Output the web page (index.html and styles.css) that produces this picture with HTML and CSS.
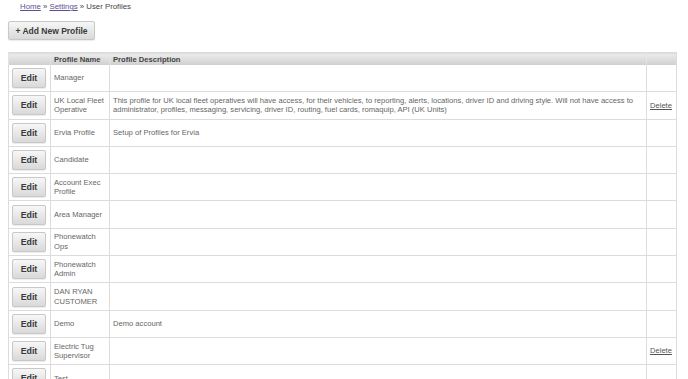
FILE: index.html
```html
<!DOCTYPE html>
<html lang="en">
<head>
    <meta charset="UTF-8">
    <title>User Profiles</title>
    <link rel="stylesheet" href="styles.css">
</head>
<body>
    <div class="breadcrumb">
        <a href="#">Home</a> &raquo; <a href="#">Settings</a> &raquo; User Profiles
    </div>

    <button class="btn add-btn">+ Add New Profile</button>

    <table class="profiles">
        <thead>
            <tr>
                <th class="col-edit"></th>
                <th class="col-name">Profile Name</th>
                <th class="col-desc">Profile Description</th>
                <th class="col-del"></th>
            </tr>
        </thead>
        <tbody>
            <tr>
                <td><button class="btn edit-btn">Edit</button></td>
                <td>Manager</td>
                <td></td>
                <td></td>
            </tr>
            <tr>
                <td><button class="btn edit-btn">Edit</button></td>
                <td>UK Local Fleet Operative</td>
                <td>This profile for UK local fleet operatives will have access, for their vehicles, to reporting, alerts, locations, driver ID and driving style. Will not have access to administrator, profiles, messaging, servicing, driver ID, routing, fuel cards, romaquip, API (UK Units)</td>
                <td><a href="#">Delete</a></td>
            </tr>
            <tr>
                <td><button class="btn edit-btn">Edit</button></td>
                <td>Ervia Profile</td>
                <td>Setup of Profiles for Ervia</td>
                <td></td>
            </tr>
            <tr>
                <td><button class="btn edit-btn">Edit</button></td>
                <td>Candidate</td>
                <td></td>
                <td></td>
            </tr>
            <tr>
                <td><button class="btn edit-btn">Edit</button></td>
                <td>Account Exec Profile</td>
                <td></td>
                <td></td>
            </tr>
            <tr>
                <td><button class="btn edit-btn">Edit</button></td>
                <td>Area Manager</td>
                <td></td>
                <td></td>
            </tr>
            <tr>
                <td><button class="btn edit-btn">Edit</button></td>
                <td>Phonewatch Ops</td>
                <td></td>
                <td></td>
            </tr>
            <tr>
                <td><button class="btn edit-btn">Edit</button></td>
                <td>Phonewatch Admin</td>
                <td></td>
                <td></td>
            </tr>
            <tr>
                <td><button class="btn edit-btn">Edit</button></td>
                <td>DAN RYAN CUSTOMER</td>
                <td></td>
                <td></td>
            </tr>
            <tr>
                <td><button class="btn edit-btn">Edit</button></td>
                <td>Demo</td>
                <td>Demo account</td>
                <td></td>
            </tr>
            <tr>
                <td><button class="btn edit-btn">Edit</button></td>
                <td>Electric Tug Supervisor</td>
                <td></td>
                <td><a href="#">Delete</a></td>
            </tr>
            <tr>
                <td><button class="btn edit-btn">Edit</button></td>
                <td>Test</td>
                <td></td>
                <td></td>
            </tr>
        </tbody>
    </table>
</body>
</html>
```

FILE: styles.css
```css
body {
    margin: 0;
    padding: 0 11px 0 8px;
    background-color: #fff;
    color: #666;
    font-family: "Liberation Sans", Arial, sans-serif;
    font-size: 7.6px;
}

.breadcrumb {
    padding: 2px 0 0 12px;
    height: 19px;
    color: #444;
    font-size: 7.8px;
    line-height: 9px;
}

.breadcrumb a {
    color: #5e4f95;
    text-decoration: underline;
}

.btn {
    font-family: "Liberation Sans", Arial, sans-serif;
    font-weight: bold;
    color: #3a3a3a;
    border: 1px solid #c8c8c8;
    border-radius: 2px;
    background-image: linear-gradient(#f7f7f7, #d9d9d9);
    box-shadow: 0 1px 1px rgba(0, 0, 0, 0.08);
    cursor: pointer;
    padding: 0;
}

.add-btn {
    display: block;
    width: 87px;
    height: 19px;
    font-size: 8.5px;
    margin-bottom: 12px;
}

.profiles {
    width: 100%;
    border-collapse: collapse;
    border: 1px solid #dcdcdc;
}

.profiles th {
    height: 12px;
    padding: 0 3px;
    text-align: left;
    font-size: 7.6px;
    font-weight: bold;
    color: #444;
    background-image: linear-gradient(#ececec, #cfcfcf);
    border-left: 1px solid #e4e4e4;
}

.profiles td {
    padding: 3px 3px;
    height: 20.3px;
    line-height: 9.5px;
    vertical-align: middle;
    border-bottom: 1px solid #dcdcdc;
    border-left: 1px solid #dcdcdc;
}

.profiles .col-edit {
    width: 35px;
}

.profiles .col-name {
    width: 52px;
}

.profiles .col-del {
    width: 23px;
}

.edit-btn {
    display: block;
    width: 34px;
    height: 20px;
    font-size: 8.8px;
}

.profiles td a {
    color: #555;
    text-decoration: underline;
}
```
